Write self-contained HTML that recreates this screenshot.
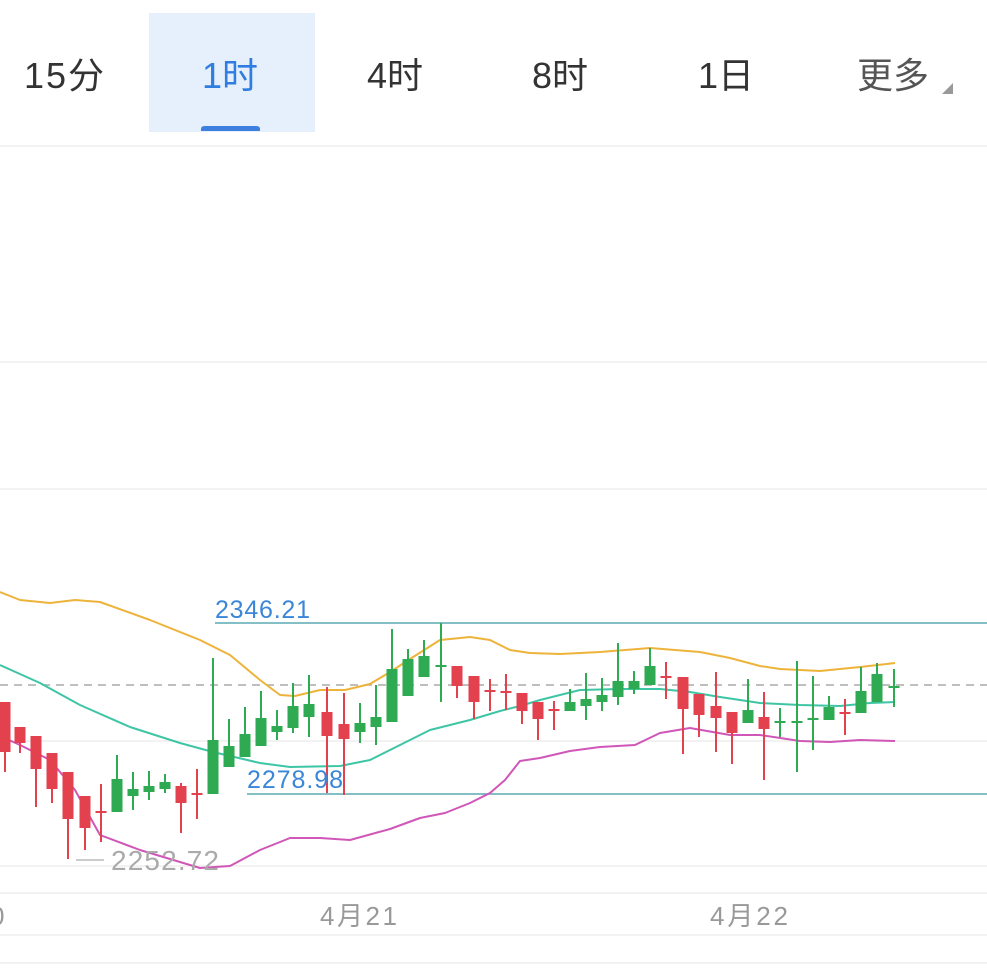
<!DOCTYPE html>
<html><head><meta charset="utf-8"><style>
body{margin:0;width:987px;height:978px;background:#fff;overflow:hidden;font-family:"Liberation Sans","Noto Sans CJK SC",sans-serif}
</style></head><body>
<svg width="987" height="978" viewBox="0 0 987 978" xmlns="http://www.w3.org/2000/svg" style="position:absolute;left:0;top:0">
<rect x="149" y="13" width="166" height="119" fill="#e6f0fc"/>
<path d="M201 131 V129 Q201 126 205 126 H256 Q260 126 260 129 V131 Z" fill="#3c7fde"/>
<g font-size="36" font-family="Liberation Sans,Noto Sans CJK SC,sans-serif" fill="#333">
<text x="24" y="88" textLength="80">15分</text>
<text x="202" y="88" fill="#2f7de1">1时</text>
<text x="367" y="88">4时</text>
<text x="532" y="88">8时</text>
<text x="698" y="88">1日</text>
<text x="857" y="88" fill="#555">更多</text>
</g>
<path d="M953 83 L953 94 L942 94 Z" fill="#999"/>
<g stroke="#f2f2f2" stroke-width="2">
<line x1="0" y1="146" x2="987" y2="146"/>
<line x1="0" y1="362" x2="987" y2="362"/>
<line x1="0" y1="489" x2="987" y2="489"/>
<line x1="0" y1="741" x2="987" y2="741"/>
<line x1="0" y1="866" x2="987" y2="866"/>
<line x1="0" y1="893" x2="987" y2="893"/>
<line x1="0" y1="935" x2="987" y2="935"/>
<line x1="0" y1="963" x2="987" y2="963"/>
</g>
<line x1="215" y1="623" x2="987" y2="623" stroke="#5aaab0" stroke-width="1.5"/>
<line x1="247" y1="794" x2="987" y2="794" stroke="#5aaab0" stroke-width="1.5"/>
<line x1="0" y1="685" x2="987" y2="685" stroke="#aaa" stroke-width="1.5" stroke-dasharray="8,6"/>
<g fill="none" stroke-width="2" stroke-linejoin="round">
<polyline stroke="#eeb33a" points="0,592 20,600 50,603 75,600 100,602 150,620 200,640 230,655 260,680 280,695 295,696 320,690 345,690 370,684 390,672 410,659 440,640 470,637 490,640 510,650 530,653 560,654 600,652 650,648 700,652 730,658 760,666 780,669 820,671 860,667 895,663"/>
<polyline stroke="#3ec5a5" points="0,665 40,683 80,705 130,727 180,743 213,752 260,763 290,767 340,766 370,760 400,745 430,730 470,720 500,711 520,706 540,700 580,690 620,689 660,689 690,692 720,697 760,703 800,705 840,706 870,703 895,702"/>
<polyline stroke="#d056b8" points="0,736 20,745 50,760 75,790 100,835 140,850 200,868 230,866 260,850 290,838 320,838 350,840 390,829 420,818 445,813 470,803 490,793 505,780 520,761 540,758 570,751 600,747 635,745 660,733 690,728 730,735 760,735 800,741 830,742 860,740 895,741"/>
</g>
<g id="c"></g>
<g font-family="Liberation Sans,Noto Sans CJK SC,sans-serif">
<text x="215" y="618" font-size="25" textLength="95" fill="#3a86d8">2346.21</text>
<text x="247" y="788" font-size="25" textLength="96" fill="#3a86d8">2278.98</text>
<line x1="76" y1="860" x2="104" y2="860" stroke="#bbb" stroke-width="1.5"/>
<text x="111" y="870" font-size="28" textLength="108" fill="#aaa">2252.72</text>
<text x="-10" y="925" font-size="26" fill="#999">0</text>
<text x="320" y="925" font-size="26" textLength="77" fill="#999">4月21</text>
<text x="710" y="925" font-size="26" textLength="78" fill="#999">4月22</text>
</g>
</svg>
<script>
var d=[[5,702,752,702,772,'r'],[20,727,743,727,753,'r'],[36,736,769,736,807,'r'],[52,753,789,753,803,'r'],[68,772,819,772,859,'r'],[85,796,828,796,850,'r'],[101,811,813,784,842,'r'],[117,779,812,755,812,'g'],[133,789,796,772,810,'g'],[149,786,792,771,800,'g'],[165,782,789,774,793,'g'],[181,786,803,783,833,'r'],[197,793,795,769,819,'r'],[213,740,794,658,794,'g'],[229,746,767,719,767,'g'],[245,734,757,707,757,'g'],[261,718,746,691,746,'g'],[277,726,732,710,740,'g'],[293,706,728,683,733,'g'],[309,704,717,675,737,'g'],[327,712,736,687,793,'r'],[344,724,739,693,795,'r'],[360,723,732,703,743,'g'],[376,717,727,685,745,'g'],[392,669,722,629,722,'g'],[408,659,696,649,696,'g'],[424,656,677,640,677,'g'],[441,665,667,623,702,'g'],[457,666,686,666,698,'r'],[474,676,702,676,719,'r'],[490,690,692,679,711,'r'],[506,691,693,674,710,'r'],[522,693,711,693,724,'r'],[538,702,719,702,740,'r'],[554,709,711,701,730,'r'],[570,702,711,689,711,'g'],[586,699,706,673,720,'g'],[602,695,702,678,711,'g'],[618,681,697,643,705,'g'],[634,681,689,671,694,'g'],[650,666,685,648,685,'g'],[666,676,678,662,699,'r'],[683,677,709,677,754,'r'],[699,694,715,694,737,'r'],[716,706,718,672,752,'r'],[732,712,733,712,764,'r'],[748,710,723,679,723,'g'],[764,717,729,692,780,'r'],[780,721,723,708,737,'g'],[797,721,723,661,772,'g'],[813,718,720,676,750,'g'],[829,707,720,696,720,'g'],[845,712,714,699,735,'r'],[861,691,713,667,713,'g'],[877,674,702,663,702,'g'],[894,686,688,669,707,'g']];
var s='';d.forEach(function(c){var col=c[5]=='r'?'#e4414f':'#2eaa52';var h=Math.max(c[2]-c[1],2);s+='<line x1="'+c[0]+'" y1="'+c[3]+'" x2="'+c[0]+'" y2="'+c[4]+'" stroke="'+col+'" stroke-width="2"/><rect x="'+(c[0]-5.5)+'" y="'+c[1]+'" width="11" height="'+h+'" fill="'+col+'"/>';});
document.getElementById('c').innerHTML=s;
</script>
</body></html>
